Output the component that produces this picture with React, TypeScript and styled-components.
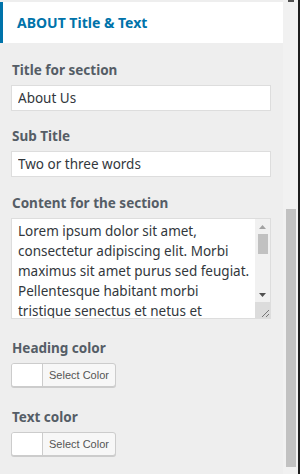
import React from "react";
import styled, { createGlobalStyle } from "styled-components";

const GlobalStyle = createGlobalStyle`
  html, body {
    margin: 0;
    padding: 0;
    background: #eeeeee;
    font-family: "Noto Sans", "Open Sans", sans-serif;
  }
`;

const Frame = styled.div`
  display: flex;
  width: 300px;
  height: 474px;
  overflow: hidden;
  background: #eeeeee;
`;

const Panel = styled.div`
  width: 283px;
  padding-top: 2px;
  box-sizing: border-box;
`;

const SectionHeader = styled.h3`
  margin: 0;
  height: 41px;
  display: flex;
  align-items: center;
  padding-left: 14px;
  background: #fff;
  border-left: 3px solid #0073aa;
  color: #0073aa;
  font-size: 14px;
  font-weight: 700;
`;

const Body = styled.div`
  padding: 17px 12px 0 11px;
  display: flex;
  flex-direction: column;
`;

const Field = styled.div<{ gap?: number }>`
  display: flex;
  flex-direction: column;
  margin-bottom: ${(p) => p.gap ?? 15}px;
`;

const Label = styled.label`
  color: #555d66;
  font-size: 13.5px;
  font-weight: 700;
  line-height: 20px;
  margin-bottom: 5px;
  padding-left: 1px;
`;

const TextInput = styled.input`
  width: 260px;
  height: 26px;
  box-sizing: border-box;
  border: 1px solid #ddd;
  background: #fff;
  padding: 0 6px;
  font-family: inherit;
  font-size: 13.5px;
  color: #32373c;
  outline: none;
`;

const AreaBox = styled.div`
  display: flex;
  width: 260px;
  height: 101px;
  box-sizing: border-box;
  border: 1px solid #ddd;
  background: #fff;
`;

const TextArea = styled.textarea`
  flex: 1;
  min-width: 0;
  border: none;
  background: transparent;
  padding: 2px 4px 0 6px;
  margin: 0;
  font-family: inherit;
  font-size: 13.5px;
  line-height: 20px;
  color: #32373c;
  resize: none;
  outline: none;
  overflow: hidden;
`;

const AreaScroll = styled.div`
  width: 15px;
  display: flex;
  flex-direction: column;
  background: #f1f1f1;
`;

const ArrowButton = styled.div`
  height: 15px;
  display: flex;
  align-items: center;
  justify-content: center;
`;

const AreaTrack = styled.div`
  flex: 1;
  display: flex;
  justify-content: center;
`;

const AreaThumb = styled.div`
  width: 10px;
  height: 20px;
  background: #c1c1c1;
`;

const ResizeCorner = styled.div`
  height: 16px;
  background: #dcdcdc;
  display: flex;
  align-items: flex-end;
  justify-content: flex-end;
`;

const ColorButton = styled.button`
  display: flex;
  align-items: stretch;
  width: 105px;
  height: 24px;
  padding: 0;
  border: 1px solid #ccc;
  border-radius: 3px;
  background: #f7f7f7;
  box-shadow: 0 1px 0 #ccc;
  overflow: hidden;
  cursor: pointer;
`;

const Swatch = styled.span<{ color: string }>`
  width: 30px;
  background: ${(p) => p.color};
  border-right: 1px solid #ccc;
`;

const ButtonText = styled.span`
  flex: 1;
  display: flex;
  align-items: center;
  justify-content: center;
  font-family: inherit;
  font-size: 11px;
  color: #555;
`;

const Scrollbar = styled.div`
  width: 15px;
  background: #f1f1f1;
  display: flex;
  flex-direction: column;
  align-items: center;
`;

const ArrowStub = styled.div`
  width: 6px;
  height: 2px;
  margin-left: 1px;
  background: #505050;
`;

const Thumb = styled.div`
  width: 10px;
  height: 258px;
  margin-top: 207px;
  background: #c1c1c1;
`;

const EdgeLine = styled.div`
  width: 2px;
  background: #1d1d1d;
`;

const Triangle: React.FC<{ up?: boolean; color: string }> = ({ up, color }) => (
  <svg width="7" height="4" viewBox="0 0 7 4">
    <polygon points={up ? "0,4 7,4 3.5,0" : "0,0 7,0 3.5,4"} fill={color} />
  </svg>
);

const lorem =
  "Lorem ipsum dolor sit amet, consectetur adipiscing elit. Morbi maximus sit amet purus sed feugiat. Pellentesque habitant morbi tristique senectus et netus et malesuada fames ac turpis egestas. Vestibulum tortor quam, feugiat vitae.";

const App: React.FC = () => {
  return (
    <>
      <GlobalStyle />
      <Frame>
        <Panel>
          <SectionHeader>ABOUT Title &amp; Text</SectionHeader>
          <Body>
            <Field>
              <Label>Title for section</Label>
              <TextInput defaultValue="About Us" />
            </Field>
            <Field gap={16}>
              <Label>Sub Title</Label>
              <TextInput defaultValue="Two or three words" />
            </Field>
            <Field gap={19}>
              <Label>Content for the section</Label>
              <AreaBox>
                <TextArea defaultValue={lorem} />
                <AreaScroll>
                  <ArrowButton>
                    <Triangle up color="#a3a3a3" />
                  </ArrowButton>
                  <AreaTrack>
                    <AreaThumb />
                  </AreaTrack>
                  <ArrowButton>
                    <Triangle color="#505050" />
                  </ArrowButton>
                  <ResizeCorner>
                    <svg width="10" height="10" viewBox="0 0 10 10">
                      <line x1="9" y1="2" x2="2" y2="9" stroke="#777" strokeWidth="1" />
                      <line x1="9" y1="6" x2="6" y2="9" stroke="#777" strokeWidth="1" />
                    </svg>
                  </ResizeCorner>
                </AreaScroll>
              </AreaBox>
            </Field>
            <Field gap={20}>
              <Label>Heading color</Label>
              <ColorButton>
                <Swatch color="#ffffff" />
                <ButtonText>Select Color</ButtonText>
              </ColorButton>
            </Field>
            <Field>
              <Label>Text color</Label>
              <ColorButton>
                <Swatch color="#ffffff" />
                <ButtonText>Select Color</ButtonText>
              </ColorButton>
            </Field>
          </Body>
        </Panel>
        <Scrollbar>
          <ArrowStub />
          <Thumb />
        </Scrollbar>
        <EdgeLine />
      </Frame>
    </>
  );
};

export default App;
